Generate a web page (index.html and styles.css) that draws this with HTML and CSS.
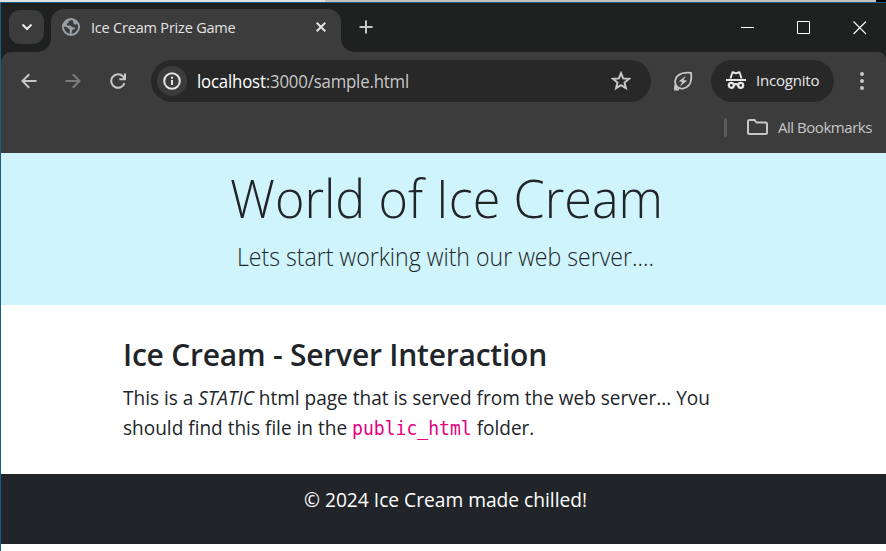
FILE: index.html
```html
<!DOCTYPE html>
<html lang="en">
<head>
<meta charset="utf-8">
<title>Ice Cream Prize Game</title>
<link rel="stylesheet" href="styles.css">
</head>
<body>
<div class="strip"><span class="strip-tab"></span><span class="strip-mid"></span></div>
<div class="window">
  <div class="tabbar">
    <button class="tab-search" aria-label="Search tabs"><svg width="12" height="8" viewBox="0 0 12 8"><path d="M1.500 1.500 6 6l4.500-4.500" fill="none" stroke="#e8e8e8" stroke-width="2.200"/></svg></button>
    <div class="tab">
      <svg class="globe" width="18" height="18" viewBox="0 0 18 18"><circle cx="9" cy="9" r="9" fill="#9aa0a6"/><path d="M10.500 2C8 2.200 6.500 3 6.500 4.200c0 1.300-1.800.7-1.800 2.300 0 1.200 1.600 1.100 3 1.100 1.600 0 1.500 1.500 2.700 1.700 1.300.2 2.700-.1 2.700 1 0 1.100-1.600.9-2.500 1.500-.8.6-.5 2.900-1.200 3.900 3.600-.1 6.600-3.200 6.600-6.700 0-1-.2-2-.7-2.900-.6.4-1.800.6-2.700.3-1.500-.5-.9-2.200-1.500-3-.3-.4-.6-.8-.6-1.400zM2 8.700c0 3.400 2.400 6.300 5.600 7 .4-1.500-.2-2.100.3-3.200.6-1.300-1.700-1.900-2.300-2.800-.5-.8-1.700-1-3.600-1z" fill="#3c3c3c"/></svg>
      <span class="tab-title">Ice Cream Prize Game</span>
      <svg class="tab-close" width="10" height="10" viewBox="0 0 10 10"><path d="M.7.7l8.600 8.600M9.300.7.7 9.300" stroke="#e3e3e3" stroke-width="2"/></svg>
    </div>
    <svg class="new-tab" width="14" height="14" viewBox="0 0 14 14"><path d="M7 .5v13M.5 7h13" stroke="#c7c7c7" stroke-width="2"/></svg>
    <div class="controls">
      <svg width="14" height="14" viewBox="0 0 14 14"><path d="M0 6.500h13" stroke="#fff"/></svg>
      <svg width="14" height="14" viewBox="0 0 14 14"><path d="M.5.5h12v12H.5z" stroke="#fff" fill="none"/></svg>
      <svg width="14" height="14" viewBox="0 0 14 14"><path d="m.5.5 12.500 12.500M13 .5.5 13" stroke="#fff" stroke-width="1.100"/></svg>
    </div>
  </div>
  <div class="toolbar">
    <svg class="back" width="16" height="16" viewBox="0 0 16 16"><path d="M15.500 8H1.800M8.200 1.300 1.500 8l6.700 6.700" fill="none" stroke="#c7c7c7" stroke-width="2"/></svg>
    <svg class="forward" width="16" height="16" viewBox="0 0 16 16"><path d="M.5 8h13.700M7.800 1.300 14.500 8l-6.700 6.700" fill="none" stroke="#7b7b7b" stroke-width="2"/></svg>
    <svg class="reload" width="16" height="16" viewBox="0 0 16 16"><path d="M14.500 10.100A6.800 6.800 0 1 1 12.900 3.200L14.600 5M15 .5v5.800H9.300" fill="none" stroke="#c7c7c7" stroke-width="2"/></svg>
    <div class="omnibox">
      <span class="info"><svg width="18" height="18" viewBox="0 0 18 18"><circle cx="9" cy="9" r="7.800" fill="none" stroke="#e3e3e3" stroke-width="2"/><path d="M9 8v5M9 4.800v2" stroke="#e3e3e3" stroke-width="2"/></svg></span>
      <span class="url"><span class="host">localhost</span>:3000/sample.html</span>
      <svg class="star" width="20" height="20" viewBox="0 0 20 20"><path d="m10 2.200 2.100 5.200 5.800.5-4.400 3.700 1.400 5.600-4.900-3-4.900 3 1.400-5.600L2.100 7.900l5.800-.5z" fill="none" stroke="#c7c7c7" stroke-width="2"/></svg>
    </div>
    <svg class="leaf" width="20" height="20" viewBox="0 0 20 20"><path d="M1.500 18.300 4 15.700C.8 12 1.800 6.800 5.600 4 8.900 1.600 13 1.300 18 1.800c.7 5.400.4 9.600-2.300 12.600-3.300 3.700-8.300 4.200-11.700 1.300M2 14.200v4.300h4" fill="none" stroke="#c7c7c7" stroke-width="1.800"/><path d="m13 4.700-7.200 5.600 3.500.7-2.600 4.500 7.400-5.700-3.600-.8z" fill="#c7c7c7"/></svg>
    <div class="incognito">
      <svg width="20" height="18" viewBox="0 0 20 18"><path d="M0 8h20v2H0zM3.500 7.500 5.700.8C6 .1 6.500 0 7.200.3L10 1.200l2.800-.9c.7-.3 1.200-.2 1.500.5l2.200 6.700h-2L13 2.400l-3 .9-3-.9-1.500 5.100z" fill="#e8e8e8"/><g fill="none" stroke="#e8e8e8" stroke-width="2.200"><circle cx="5.300" cy="14.300" r="2.500"/><circle cx="14.700" cy="14.300" r="2.500"/><path d="M7.800 13.700q2.200-1.200 4.400 0"/></g></svg>
      <span>Incognito</span>
    </div>
    <svg class="more" width="4" height="18" viewBox="0 0 4 18" fill="#c7c7c7"><circle cx="2" cy="2" r="2"/><circle cx="2" cy="9" r="2"/><circle cx="2" cy="16" r="2"/></svg>
  </div>
  <div class="bookmarks">
    <span class="divider"></span>
    <svg width="21" height="16" viewBox="0 0 21 16"><path d="M1 2.500Q1 1 2.500 1h5l2 2.500h9Q20 3.500 20 5v8.500q0 1.500-1.500 1.500h-16Q1 15 1 13.500z" fill="none" stroke="#c7c7c7" stroke-width="2"/></svg>
    <span class="bookmark-label">All Bookmarks</span>
  </div>
  <header class="hero">
    <h1>World of Ice Cream</h1>
    <p>Lets start working with our web server....</p>
  </header>
  <main>
    <h2>Ice Cream - Server Interaction</h2>
    <p>This is a <em>STATIC</em> html page that is served from the web server... You<br>
    should find this file in the <code>public_html</code> folder.</p>
  </main>
  <footer><span>© 2024 Ice Cream made chilled!</span></footer>
</div>
</body>
</html>
```
FILE: styles.css
```css
* { box-sizing: border-box; }
body { margin: 0; height: 551px; overflow: hidden; background: #fff; font-family: "Open Sans", "Noto Sans", sans-serif; color: #212529; }
h1, h2, p { margin: 0; }
svg { display: block; flex: none; }
.strip { display: flex; height: 2px; background: #000; }
.strip-tab { width: 325px; background: #dfe1e4; }
.strip-mid { width: 551px; background: #c2bfbe; }
.window { height: 549px; border-top: 1px solid #1c5c83; border-left: 1px solid #1c5c83; white-space: nowrap; }
.tabbar { position: relative; z-index: 1; display: flex; height: 49px; background: #1f2120; }
.tab-search { display: flex; align-items: center; justify-content: center; width: 35px; height: 34px; margin: 7px 0 0 8px; padding: 0; border: 0; border-radius: 11px; background: #3c3c3c; }
.tab { position: relative; display: flex; align-items: center; width: 290px; height: 43px; margin: 6px 0 0 7px; padding: 0 15px 7px 11px; border-radius: 13px 13px 0 0; background: #3c3c3c; }
.tab::before, .tab::after { content: ""; position: absolute; bottom: 0; width: 13px; height: 13px; }
.tab::before { left: -13px; background: radial-gradient(circle at 0 0, transparent 12.5px, #3c3c3c 13px); }
.tab::after { right: -13px; background: radial-gradient(circle at 100% 0, transparent 12.5px, #3c3c3c 13px); }
.tab-title { margin-left: 11px; font-size: 14.5px; letter-spacing: -.2px; color: #e3e3e3; }
.tab-close { margin-left: auto; }
.new-tab { margin: 17px 0 0 18px; }
.controls { display: flex; gap: 42px; margin: 18px 19px 0 auto; }
.toolbar { position: relative; display: flex; align-items: center; height: 58px; border-radius: 11px 8px 0 0; background: #3c3c3c; box-shadow: 0 -12px 0 #1f2120; }
.back { margin-left: 20px; }
.forward { margin-left: 28px; }
.reload { margin-left: 29px; }
.omnibox { display: flex; align-items: center; width: 500px; height: 42px; margin-left: 25px; padding: 0 20px 0 6px; border-radius: 21px; background: #282828; }
.info { display: flex; align-items: center; justify-content: center; width: 30px; height: 30px; border-radius: 50%; background: #3c3c3c; }
.url { margin-left: 10px; font-size: 18px; letter-spacing: -.2px; color: #c7c7c7; transform: scaleX(.934); transform-origin: left; }
.host { color: #fff; }
.star { margin-left: auto; }
.leaf { margin-left: 22px; }
.incognito { display: flex; align-items: center; width: 123px; height: 42px; margin-left: 18px; padding: 0 0 2px 15px; border-radius: 21px; background: #282828; color: #e8e8e8; font-size: 15px; letter-spacing: -.2px; }
.incognito span { margin-left: 10px; }
.more { margin-left: 26px; }
.bookmarks { display: flex; align-items: center; justify-content: flex-end; height: 43px; padding: 0 14px 9px 0; background: #3c3c3c; color: #c7c7c7; font-size: 15px; }
.divider { width: 3px; height: 19px; margin-right: 20px; border-radius: 2px; background: #5c5c5c; }
.bookmark-label { margin-left: 10px; letter-spacing: -.45px; }
.hero { height: 152px; padding-top: 11px; background: #cff4fc; }
.hero h1 { margin-left: 229px; font-weight: 300; font-size: 54px; line-height: 66px; transform: scaleX(.932); transform-origin: left; }
.hero p { margin: 8px 0 0 236px; font-weight: 300; font-size: 25px; line-height: 36px; transform: scaleX(.924); transform-origin: left; }
main { height: 169px; padding: 31px 0 0 122px; }
h2 { font-weight: 600; font-size: 30px; line-height: 38px; letter-spacing: -.22px; }
main p { margin-top: 9px; font-size: 20px; line-height: 30px; transform: scaleX(.951); transform-origin: left; }
code { font-family: "DejaVu Sans Mono", monospace; font-size: 19px; line-height: 1; color: #e6007e; }
footer { height: 70px; padding-top: 11px; background: #212529; color: #fff; font-size: 20px; line-height: 30px; }
footer span { display: inline-block; margin-left: 303px; transform: scaleX(.959); transform-origin: left; }
```
